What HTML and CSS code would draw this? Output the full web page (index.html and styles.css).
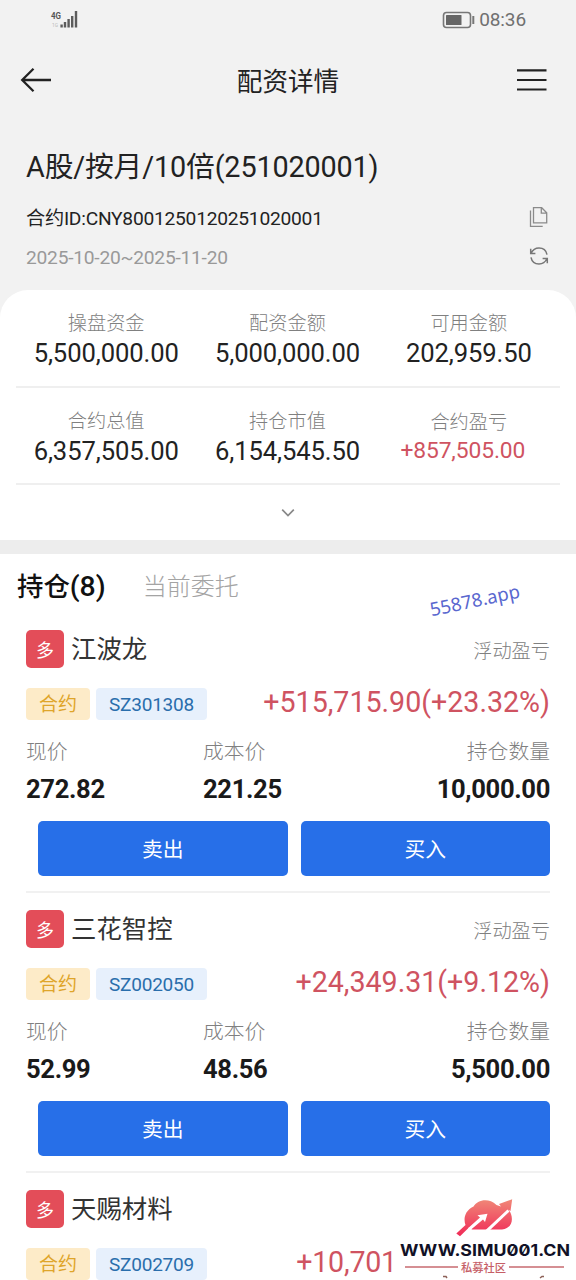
FILE: index.html
```html
<!DOCTYPE html>
<html lang="zh-CN">
<head>
<meta charset="utf-8">
<title>配资详情</title>
<link rel="stylesheet" href="styles.css">
</head>
<body>
<div class="screen">
  <div class="status">
    <svg class="signal" width="30" height="20" viewBox="0 0 30 20">
      <text x="1" y="9" class="net" textLength="10" lengthAdjust="spacingAndGlyphs">4G</text>
      <text x="2" y="17" class="net-sub" textLength="6" lengthAdjust="spacingAndGlyphs">1G</text>
      <path d="M11.600 14.500v3M15 12v5.500M18.600 9v8.500M22.200 6v11.500M26 1v16.500" stroke="#5c5c5c" stroke-width="2.400"/>
    </svg>
    <div class="status-right">
      <svg width="34" height="18" viewBox="0 0 34 18">
        <rect x="1.500" y="1.500" width="27" height="15" rx="3" fill="none" stroke="#777" stroke-width="1.600"/>
        <rect x="4" y="4" width="15.500" height="10" rx=".6" fill="#666"/>
        <path d="M31.300 5v8" stroke="#777" stroke-width="2"/>
      </svg>
      <span class="clock">08:36</span>
    </div>
  </div>
  <header class="nav">
    <svg width="32" height="26" viewBox="0 0 32 26" fill="none" stroke="#222" stroke-width="2.300"><path d="M31 13H3M13.500 1.700L2.200 13l11.300 11.300"/></svg>
    <h1>配资详情</h1>
    <svg width="30" height="24" viewBox="0 0 30 24" stroke="#222" stroke-width="2.200"><path d="M0 2.300h29.500M0 12h29.500M0 21.500h29.500"/></svg>
  </header>
  <section class="contract">
    <h2>A股/按月/10倍(251020001)</h2>
    <div class="line id"><span>合约ID:CNY8001250120251020001</span>
      <svg width="20" height="22" viewBox="0 0 20 22" fill="none" stroke="#8b8b8b" stroke-width="1.300"><path d="M4.500 1.700h8.200l5 5v10.200H4.500zM12.300 1.700v5.500h5.400M1.500 4.500v15.800h12.200"/></svg>
    </div>
    <div class="line date"><span>2025-10-20~2025-11-20</span>
      <svg width="20" height="20" viewBox="0 0 20 20" fill="none" stroke="#777" stroke-width="1.500"><path d="M2.100 7.200C3.700 3.800 6.500 2 10 2c4 0 7.200 2.600 8 6.600M17.900 12.800C16.300 16.200 13.500 18 10 18c-4 0-7.200-2.600-8-6.600M1.700 2.800v4.700h4.700M18.300 17.200v-4.700h-4.700"/></svg>
    </div>
  </section>
  <section class="summary">
    <div class="stats">
      <div class="stat"><span>操盘资金</span><b>5,500,000.00</b></div>
      <div class="stat"><span>配资金额</span><b>5,000,000.00</b></div>
      <div class="stat"><span>可用金额</span><b>202,959.50</b></div>
    </div>
    <div class="stats">
      <div class="stat"><span>合约总值</span><b>6,357,505.00</b></div>
      <div class="stat"><span>持仓市值</span><b>6,154,545.50</b></div>
      <div class="stat profit"><span>合约盈亏</span><b>+857,505.00</b></div>
    </div>
    <div class="expand"><svg width="14" height="10" viewBox="0 0 14 10" fill="none" stroke="#888" stroke-width="1.700"><path d="M1.200 1.700L7 7.500l5.800-5.800"/></svg></div>
  </section>
  <main class="positions">
    <div class="tabs"><span class="tab active">持仓<span class="count">(8)</span></span><span class="tab">当前委托</span></div>
    <article class="position">
      <div class="head"><i class="side">多</i><span class="name">江波龙</span><span class="hint">浮动盈亏</span></div>
      <div class="tags"><span class="tag type">合约</span><span class="tag code">SZ301308</span><span class="pnl">+515,715.90(+23.32%)</span></div>
      <div class="figures">
        <div><span>现价</span><b>272.82</b></div>
        <div><span>成本价</span><b>221.25</b></div>
        <div><span>持仓数量</span><b>10,000.00</b></div>
      </div>
      <div class="actions"><button>卖出</button><button>买入</button></div>
    </article>
    <article class="position">
      <div class="head"><i class="side">多</i><span class="name">三花智控</span><span class="hint">浮动盈亏</span></div>
      <div class="tags"><span class="tag type">合约</span><span class="tag code">SZ002050</span><span class="pnl">+24,349.31(+9.12%)</span></div>
      <div class="figures">
        <div><span>现价</span><b>52.99</b></div>
        <div><span>成本价</span><b>48.56</b></div>
        <div><span>持仓数量</span><b>5,500.00</b></div>
      </div>
      <div class="actions"><button>卖出</button><button>买入</button></div>
    </article>
    <article class="position last">
      <div class="head"><i class="side">多</i><span class="name">天赐材料</span></div>
      <div class="tags"><span class="tag type">合约</span><span class="tag code">SZ002709</span><span class="pnl">+10,701</span></div>
    </article>
  </main>
  <div class="stamp">55878.app</div>
  <svg class="brand" width="178" height="86" viewBox="0 0 178 86">
    <defs><linearGradient id="cloud" gradientUnits="userSpaceOnUse" x1="0" y1="5" x2="0" y2="42"><stop offset="0" stop-color="#f08878"/><stop offset="1" stop-color="#f02b57"/></linearGradient></defs>
    <rect width="178" height="86" fill="#fff"/>
    <path fill="url(#cloud)" d="M58.300 39.500L67.500 31C65.500 26 66 17 75.500 12.500C79 6.500 90 3 98.500 11L103 12.500L101 10L114.200 5.200L112.500 17L110.500 15.500C116 22 115.500 34.500 104 35.600H74L71 33.500L62 42.300Z"/>
    <path d="M72.500 36L85 25.500L87 28L89.500 19.800L79.500 21.300L82 23.500L70 34.300Z" fill="#fff"/>
    <path d="M86.500 37L109.500 15.500L111.500 17.500L91 37Z" fill="#fff"/>
    <text class="brand-url" x="2" y="61.500" textLength="170" lengthAdjust="spacingAndGlyphs">WWW.SIMU001.CN</text>
    <path d="M7 73h53M111 73h55" stroke="#c86b70" stroke-width="1.300"/>
    <text class="brand-name" x="63" y="77.500" textLength="45" lengthAdjust="spacingAndGlyphs">私募社区</text>
    <path d="M45 82.500h3l1 1.500M142 84l2-1.500h2" stroke="#8d6158" fill="none" stroke-width="1.500"/>
  </svg>
</div>
</body>
</html>
```
FILE: styles.css
```css
* { box-sizing: border-box; }
body { margin: 0; background: #fff; font-family: Roboto, "Noto Sans CJK SC", sans-serif; color: #222; }
h1, h2 { margin: 0; font-weight: 400; }
b, i { font-weight: 400; font-style: normal; }
svg { display: block; flex: none; }
.screen { position: relative; width: 576px; height: 1280px; overflow: hidden; background: #f2f2f2; display: flex; flex-direction: column; }
.status { height: 40px; flex: none; padding: 0 50px; display: flex; align-items: center; justify-content: space-between; }
.net { font: 700 9.5px Roboto, sans-serif; fill: #555; }
.net-sub { font: 6px Roboto, sans-serif; fill: #bbb; }
.status-right { display: flex; align-items: center; gap: 3px; color: #707070; }
.clock { font-size: 19px; line-height: 20px; letter-spacing: -.1px; }
.nav { height: 80px; flex: none; padding: 0 29px 0 20px; display: flex; align-items: center; justify-content: space-between; }
.nav h1 { font-size: 25.6px; line-height: 36px; padding: 4px 0 0 7px; }
.contract { height: 170px; flex: none; padding: 27px 26px 0; }
.contract h2 { font-size: 28.8px; line-height: 40px; letter-spacing: -.16px; }
.line { display: flex; justify-content: space-between; align-items: center; height: 40px; font-size: 19.2px; letter-spacing: -.24px; }
.id { margin-top: 10px; }
.date { color: #999; height: 39px; }
.date span { padding-top: 1px; }
.date svg { margin-bottom: 1px; }
.id svg, .date svg { margin-right: 1px; }
.summary { height: 264px; flex: none; padding: 0 16px; background: #fff; border-radius: 28px 28px 0 0; border-bottom: 14px solid #ededed; }
.stats { height: 97.5px; padding-top: 21px; border-bottom: 2px solid #efefef; display: grid; grid-template-columns: repeat(3, 1fr); }
.stat { display: flex; flex-direction: column; align-items: center; }
.stat span { font-size: 19.2px; line-height: 26px; color: #808080; font-weight: 300; margin-left: -1px; }
.stat b { font-size: 25.6px; line-height: 32px; letter-spacing: -.1px; margin-left: -1px; }
.profit span { padding-top: 2px; line-height: 24px; }
.profit b { font-size: 22.8px; color: #cf5361; margin-right: 12px; }
.expand { height: 55px; display: flex; align-items: center; justify-content: center; }
.positions { flex: 1; background: #fff; padding: 0 26px; }
.tabs { margin-left: -9px; padding-top: 13px; display: flex; align-items: center; height: 52px; gap: 37px; margin-bottom: 7px; }
.tab { font-size: 24px; line-height: 38px; color: #a4a4a4; font-weight: 300; }
.tab.active { font-size: 26.4px; font-weight: 500; color: #111; }
.count { font-size: 28.4px; }
.position { height: 280px; padding-top: 17px; border-bottom: 2px solid #f1f1f1; }
.position.last { border: 0; }
.head { height: 38px; display: flex; align-items: center; }
.side { width: 38px; height: 38px; border-radius: 5px; background: #e34d59; color: #fff; display: flex; align-items: center; justify-content: center; font-size: 18px; margin-right: 7px; }
.name { font-size: 25.4px; line-height: 36px; color: #333; padding-bottom: 1px; }
.hint { margin-left: auto; font-size: 19.2px; padding-top: 1px; color: #808080; font-weight: 300; }
.tags { height: 32px; margin-top: 20px; display: flex; align-items: center; gap: 6px; }
.tag { height: 32px; line-height: 34px; padding: 0 13px; border-radius: 4px; font-size: 19px; }
.type { background: #fdebc8; color: #dfa52a; }
.code { background: #e7f0fc; color: #2a6eac; letter-spacing: -.22px; }
.pnl { margin-left: auto; font-size: 28.6px; line-height: 32px; padding-bottom: 4px; color: #cf5361; }
.figures { display: grid; grid-template-columns: 177px 150px 1fr; height: 101px; padding-top: 18px; }
.figures div { display: flex; flex-direction: column; }
.figures div:last-child { align-items: flex-end; }
.figures span { font-size: 20.8px; line-height: 28px; color: #808080; font-weight: 300; }
.figures b { font-size: 25.6px; line-height: 30px; margin-top: 8px; font-weight: 700; letter-spacing: -.35px; color: #1a1a1a; }
.actions { display: grid; grid-template-columns: 1fr 1fr; gap: 13px; padding-left: 12px; }
.actions button { height: 55px; border: 0; border-radius: 5px; background: #276fe8; color: #fff; padding-bottom: 2px; font: 20.8px Roboto, "Noto Sans CJK SC", sans-serif; }
.last .pnl { margin-right: 153px; letter-spacing: -.2px; }
.stamp { position: absolute; left: 429px; top: 587px; font: 18.6px "Noto Sans", sans-serif; line-height: 26px; color: #5967cf; transform: rotate(-12deg); }
.brand { position: absolute; right: 0; bottom: 0; }
.brand-url { font: 700 16px Inter, sans-serif; font-feature-settings: "zero"; fill: #111126; }
.brand-name { font: 500 11.500px "Noto Sans CJK SC", sans-serif; fill: #c65e66; }
```
